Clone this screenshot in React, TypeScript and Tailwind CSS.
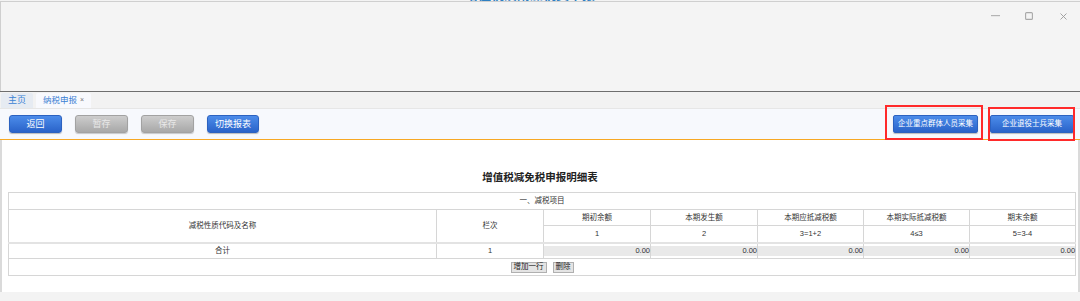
import {ReactNode} from "react";

const cell = "border border-[#d6d6d6] p-0 text-center align-middle";
const band = " border-b-2 border-b-[#e3e3e3]";

function BlueButton({text, className = "", size = "text-[9px]"}: { text: string, className?: string, size?: string }) {
    return <button
        className={"h-[18px] whitespace-nowrap border border-[#2c62c0] bg-linear-to-b from-[#4c8cea] to-[#2a63c9] leading-none text-white shadow-[0_1px_1px_rgba(0,0,0,0.25)] " + size + " " + className}>
        {text}
    </button>
}

function GrayButton({text}: { text: string }) {
    return <button
        className="h-[18px] w-[53px] rounded-[3px] border border-[#a2a2a2] bg-linear-to-b from-[#cdcdcd] to-[#a8a8a8] text-[9px] leading-none text-[#e8e8e8] shadow-[0_1px_1px_rgba(0,0,0,0.2)]">
        {text}
    </button>
}

function Marked({children, box}: { children: ReactNode, box: string }) {
    return <div className="relative flex">
        {children}
        <span className={"pointer-events-none absolute border-2 border-[#ff2a2a] " + box}/>
    </div>
}

function Amount() {
    return <td className={cell}>
        <div className="h-[10px] bg-[#e9e9e9] text-right leading-[10px]">0.00</div>
    </td>
}

function SmallButton({text}: { text: string }) {
    return <button
        className="h-[11px] whitespace-nowrap border border-[#b0b0b0] bg-[#e4e4e4] px-[2px] text-[7.5px] leading-none text-[#222]">{text}</button>
}

function App() {
    return (
        <div
            className="h-[301px] w-[1080px] overflow-hidden bg-[#f3f3f3] font-['Liberation_Sans','Noto_Sans_CJK_SC',sans-serif]">
            <div className="flex h-px justify-center overflow-hidden pr-[20px]">
                <span className="-mt-[12px] text-[13px] font-bold leading-[13px] text-[#2d80c2]">增值税及附加税费申报</span>
            </div>
            <div className="h-[90px] border-t border-l border-[#cfcfcf] bg-[#f4f4f4]">
                <div className="flex justify-end">
                    <div className="flex h-[28px] w-[34px] items-center justify-center">
                        <svg width="9" height="2" viewBox="0 0 9 2"><rect width="9" height="1.2" fill="#b4b4b4"/></svg>
                    </div>
                    <div className="flex h-[28px] w-[34px] items-center justify-center">
                        <svg width="8" height="8" viewBox="0 0 8 8">
                            <rect x="0.6" y="0.6" width="6.8" height="6.8" rx="1" fill="none" stroke="#a8a8a8" strokeWidth="1.1"/>
                        </svg>
                    </div>
                    <div className="flex h-[28px] w-[34px] items-center justify-center">
                        <svg width="7" height="7" viewBox="0 0 7 7">
                            <path d="M0.5 0.5L6.5 6.5M6.5 0.5L0.5 6.5" stroke="#9a9a9a" strokeWidth="0.9"/>
                        </svg>
                    </div>
                </div>
            </div>
            <div className="h-px bg-[#6e6e6e]"/>
            <div className="flex h-[17px] items-end gap-[3px] border-b border-[#e6e6e6] bg-[#f2f2f2] pl-[1px]">
                <div
                    className="flex h-[15px] w-[32px] items-center justify-center rounded-t-[2px] bg-[#e6ebf2] text-[9px] text-[#3c82d4]">主页
                </div>
                <div
                    className="flex h-[15px] w-[55px] items-center justify-center gap-[3px] rounded-t-[2px] bg-[#f8f9fd] text-[8.5px] text-[#3c82d4]">
                    纳税申报<span className="text-[7px] text-[#777]">×</span>
                </div>
            </div>
            <div className="flex h-[31px] items-center justify-between border-b border-[#f7a824] bg-[#f7f9fd] pl-[9px] pr-[6px]">
                <div className="flex items-center gap-[13px]">
                    <BlueButton text="返回" className="w-[53px] rounded-[3px]"/>
                    <GrayButton text="暂存"/>
                    <GrayButton text="保存"/>
                    <BlueButton text="切换报表" className="w-[52px] rounded-[3px]"/>
                </div>
                <div className="flex items-center gap-[12px]">
                    <Marked box="-left-[8px] -right-[5px] -top-[10px] -bottom-[7px]">
                        <BlueButton text="企业重点群体人员采集" size="text-[7.5px]" className="w-[85px] rounded-[2px]"/>
                    </Marked>
                    <Marked box="-left-[2px] -right-[1px] -top-[8px] -bottom-[8px]">
                        <BlueButton text="企业退役士兵采集" size="text-[7.5px]" className="w-[84px] rounded-[2px]"/>
                    </Marked>
                </div>
            </div>
            <div className="h-[152px] border-x-2 border-[#dadada] bg-white">
                <h1 className="pt-[31px] text-center text-[10.5px] font-bold leading-[12px] text-[#222]">增值税减免税申报明细表</h1>
                <table
                    className="mt-[9px] ml-[6px] w-[1067px] table-fixed border-collapse text-[7.5px] leading-none text-[#333]">
                    <colgroup>
                        <col className="w-[428px]"/>
                        <col className="w-[107px]"/>
                        <col className="w-[107px]"/>
                        <col className="w-[107px]"/>
                        <col className="w-[106px]"/>
                        <col className="w-[106px]"/>
                        <col className="w-[106px]"/>
                    </colgroup>
                    <tbody>
                    <tr className="h-[17px]">
                        <td colSpan={7} className={cell}>一、减税项目</td>
                    </tr>
                    <tr className="h-[16px]">
                        <td rowSpan={2} className={cell + band}>减税性质代码及名称</td>
                        <td rowSpan={2} className={cell + band}>栏次</td>
                        <td className={cell}>期初余额</td>
                        <td className={cell}>本期发生额</td>
                        <td className={cell}>本期应抵减税额</td>
                        <td className={cell}>本期实际抵减税额</td>
                        <td className={cell}>期末余额</td>
                    </tr>
                    <tr className="h-[17px]">
                        <td className={cell + band}>1</td>
                        <td className={cell + band}>2</td>
                        <td className={cell + band}>3=1+2</td>
                        <td className={cell + band}>4≤3</td>
                        <td className={cell + band}>5=3-4</td>
                    </tr>
                    <tr className="h-[16px]">
                        <td className={cell}>合计</td>
                        <td className={cell}>1</td>
                        <Amount/>
                        <Amount/>
                        <Amount/>
                        <Amount/>
                        <Amount/>
                    </tr>
                    <tr className="h-[17px]">
                        <td colSpan={7} className={cell}>
                            <div className="flex justify-center gap-[6px]">
                                <SmallButton text="增加一行"/>
                                <SmallButton text="删除"/>
                            </div>
                        </td>
                    </tr>
                    </tbody>
                </table>
            </div>
        </div>
    );
}

export default App;
